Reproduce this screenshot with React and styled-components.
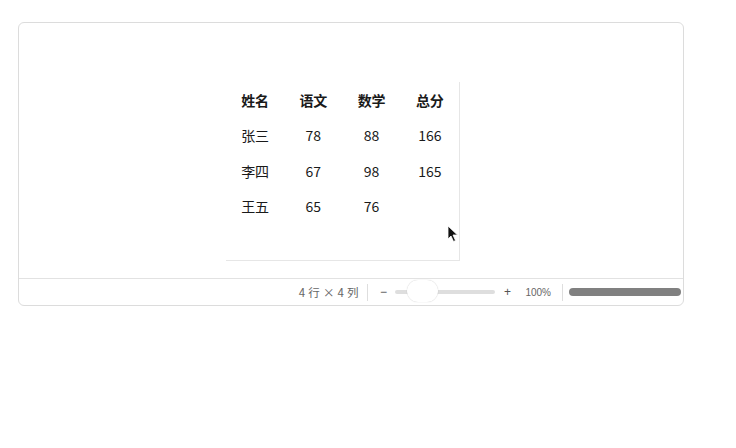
import React from 'react';
import styled, { createGlobalStyle } from 'styled-components';

const GlobalStyle = createGlobalStyle`
  html, body {
    margin: 0;
    padding: 0;
    background: #fff;
    font-family: "Noto Sans CJK SC", "Noto Sans", sans-serif;
  }
`;

const Page = styled.div`
  width: 736px;
  height: 448px;
  padding: 22px 0 0 18px;
  box-sizing: border-box;
`;

const Card = styled.div`
  width: 666px;
  height: 284px;
  border: 1px solid #dcdcdc;
  border-radius: 6px;
  box-sizing: border-box;
  display: flex;
  flex-direction: column;
  overflow: hidden;
`;

const Canvas = styled.div`
  flex: 1;
  padding: 59px 0 0 207px;
  border-bottom: 1px solid #e2e2e2;
`;

const Sheet = styled.div`
  width: 234px;
  height: 179px;
  box-sizing: border-box;
  border-right: 1px solid #e6e6e6;
  border-bottom: 1px solid #e6e6e6;
  position: relative;
`;

const Grid = styled.table`
  border-collapse: collapse;
  table-layout: fixed;
  width: 233px;
`;

const Cell = styled.td`
  width: 58px;
  height: 35.5px;
  padding: 0;
  text-align: center;
  font-size: 14px;
  font-weight: ${p => (p.$head ? 700 : 400)};
  color: #1a1a1a;
`;

const Cursor = styled.svg`
  position: absolute;
  left: 221px;
  top: 143px;
`;

const StatusBar = styled.div`
  height: 26px;
  display: flex;
  align-items: center;
  justify-content: flex-end;
  padding-right: 2px;
  color: #666;
`;

const Dims = styled.span`
  white-space: nowrap;
  font-size: 11.5px;
  word-spacing: 0.5px;
  margin-right: 9px;
`;

const Percent = styled.span`
  white-space: nowrap;
  font-family: "Liberation Sans", Arial, sans-serif;
  font-size: 10px;
  margin-left: 13px;
`;

const Divider = styled.div`
  width: 1px;
  height: 17px;
  background: #dedede;
  margin-right: ${p => p.$mr}px;
`;

const ZoomBtn = styled.span`
  font-family: "Liberation Sans", Arial, sans-serif;
  font-size: 12px;
  color: #555;
  width: 10px;
  text-align: center;
`;

const Track = styled.div`
  width: 100px;
  height: 4px;
  background: #dedede;
  border-radius: 2px;
  margin: 0 7px;
  position: relative;
`;

const Thumb = styled.div`
  position: absolute;
  left: 12px;
  top: -10px;
  width: 31px;
  height: 22px;
  background: #fff;
  border-radius: 11px;
  box-shadow: 0 0 1px rgba(0, 0, 0, 0.25);
`;

const Scroll = styled.div`
  margin-left: 11px;
  width: 112px;
  height: 8px;
  border-radius: 4px;
  background: #808080;
`;

const rows = [
  ['姓名', '语文', '数学', '总分'],
  ['张三', '78', '88', '166'],
  ['李四', '67', '98', '165'],
  ['王五', '65', '76', ''],
];

export default function App() {
  return (
    <>
      <GlobalStyle />
      <Page>
        <Card>
          <Canvas>
            <Sheet>
              <Grid>
                <tbody>
                  {rows.map((r, i) => (
                    <tr key={i}>
                      {r.map((c, j) => (
                        <Cell key={j} $head={i === 0}>{c}</Cell>
                      ))}
                    </tr>
                  ))}
                </tbody>
              </Grid>
              <Cursor width="12" height="18" viewBox="0 0 12 18">
                <path d="M1 1 L1 14 L4 11 L6.5 16.5 L8.5 15.5 L6 10 L10.5 10 Z" fill="#111" stroke="#fff" strokeWidth="0.8" />
              </Cursor>
            </Sheet>
          </Canvas>
          <StatusBar>
            <Dims>4 行 × 4 列</Dims>
            <Divider $mr={10} />
            <ZoomBtn>−</ZoomBtn>
            <Track>
              <Thumb />
            </Track>
            <ZoomBtn>+</ZoomBtn>
            <Percent>100%</Percent>
            <Divider style={{ marginLeft: 11 }} $mr={0} />
            <Scroll style={{ marginLeft: 6 }} />
          </StatusBar>
        </Card>
      </Page>
    </>
  );
}
